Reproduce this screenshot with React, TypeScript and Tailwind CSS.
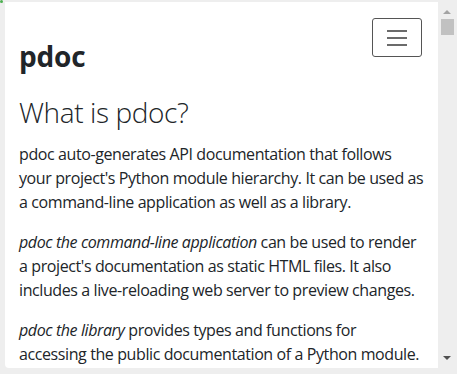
export default function App() {
  return (
    <div className="relative flex h-[374px] w-[457px] overflow-hidden bg-[#eeeeee] font-['Open_Sans',sans-serif] text-[#212529]">
      <span className="absolute left-0 top-0 h-[3px] w-[3px] rounded-full bg-[#4caf50]" />

      {/* page */}
      <div className="ml-[5px] mt-[2px] h-[366px] w-[433px] overflow-hidden rounded-bl-[4px] bg-white">
        <div className="pl-[14px] pr-[12px] pt-[16px]">
          <div className="flex justify-end pr-[4px]">
            <button className="flex h-[39px] w-[50px] flex-col items-center justify-center gap-[5px] rounded-[3px] border border-[#555]">
              <span className="h-[2px] w-[20px] bg-[#6b6b6b]" />
              <span className="h-[2px] w-[20px] bg-[#6b6b6b]" />
              <span className="h-[2px] w-[20px] bg-[#6b6b6b]" />
            </button>
          </div>
          <h1 className="-mt-[18px] text-[28px] leading-[34px] font-bold tracking-[-0.2px]">pdoc</h1>
          <h2 className="mt-[21px] mb-[12px] text-[28px] leading-[36px] font-light tracking-[-0.4px]">What is pdoc?</h2>
          <div className="text-[16px] leading-[24px] tracking-[-0.4px]">
            <p className="mb-4">
              pdoc auto-generates API documentation that follows your project's Python module hierarchy. It can be used as a command-line application as well as a library.
            </p>
            <p className="mb-4">
              <em>pdoc the command-line application</em> can be used to render a project's documentation as static HTML files. It also includes a live-reloading web server to preview changes.
            </p>
            <p className="mb-4">
              <em>pdoc the library</em> provides types and functions for accessing the public documentation of a Python module.
            </p>
          </div>
        </div>
      </div>

      {/* scrollbar */}
      <div className="relative mt-[2px] h-[366px] w-[19px]">
        <span className="absolute left-[5px] top-[8px] h-0 w-0 border-x-[4px] border-b-[4px] border-x-transparent border-b-[#a3a3a3]" />
        <span className="absolute left-[3px] top-[17px] h-[16px] w-[13px] bg-[#c1c1c1]" />
        <span className="absolute left-[5px] bottom-[8px] h-0 w-0 border-x-[4px] border-t-[4px] border-x-transparent border-t-[#505050]" />
      </div>
    </div>
  );
}
